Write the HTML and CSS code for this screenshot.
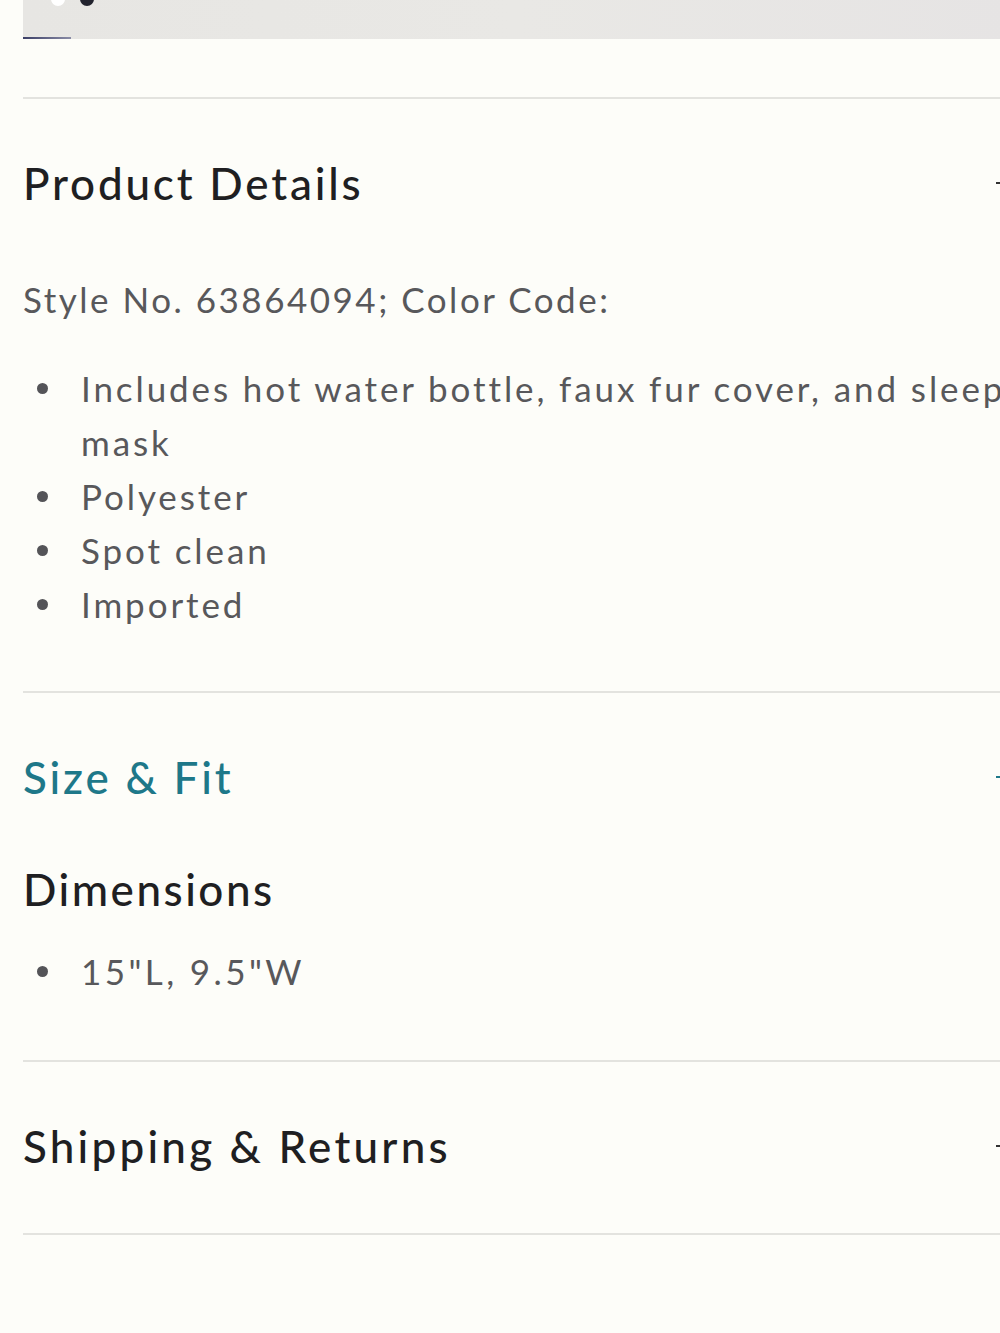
FILE: index.html
```html
<!DOCTYPE html>
<html>
<head>
<meta charset="utf-8">
<link rel="stylesheet" href="styles.css">
</head>
<body>
<div class="page">
  <div class="hero">
    <span class="dot dot-light"></span>
    <span class="dot dot-dark"></span>
    <span class="hero-bar"></span>
  </div>

  <section class="acc acc-first">
    <div class="acc-head">
      <h2 class="acc-title">Product Details</h2>
      <span class="minus"></span>
    </div>
    <div class="acc-body">
      <p class="style-no">Style No. 63864094; Color Code:</p>
      <ul class="bullets">
        <li>Includes hot water bottle, faux fur cover, and sleep mask</li>
        <li>Polyester</li>
        <li>Spot clean</li>
        <li>Imported</li>
      </ul>
    </div>
  </section>

  <section class="acc">
    <div class="acc-head">
      <h2 class="acc-title teal">Size &amp; Fit</h2>
      <span class="minus minus-teal"></span>
    </div>
    <div class="acc-body acc-body-size">
      <h3 class="sub">Dimensions</h3>
      <ul class="bullets bullets-dim">
        <li>15"L, 9.5"W</li>
      </ul>
    </div>
  </section>

  <section class="acc acc-last">
    <div class="acc-head">
      <h2 class="acc-title title-wide">Shipping &amp; Returns</h2>
      <span class="minus"></span>
    </div>
  </section>
</div>
</body>
</html>
```

FILE: styles.css
```css
html, body {
  margin: 0;
  padding: 0;
  background: #fdfdf9;
  overflow: hidden;
}
body {
  font-family: Lato, "Open Sans", sans-serif;
  width: 1000px;
  height: 1333px;
}
.page {
  margin-left: 23px;
  width: 990px;
}
.hero {
  position: relative;
  height: 39px;
  background: linear-gradient(90deg, #e7e6e3 0%, #e9e8e5 50%, #e6e4e4 100%);
  margin-bottom: 58px;
}
.dot {
  position: absolute;
  width: 14px;
  height: 14px;
  border-radius: 50%;
  top: -8px;
}
.dot-light { left: 28px; background: #ffffff; }
.dot-dark { left: 57px; background: #22232e; }
.hero-bar {
  position: absolute;
  left: 0;
  bottom: 0;
  width: 48px;
  height: 2px;
  background: linear-gradient(90deg, #3b3f66, #8a8ca6);
}
.acc {
  border-top: 2px solid #e3e3df;
}
.acc-last {
  border-bottom: 2px solid #e3e3df;
}
.acc-head {
  display: flex;
  align-items: center;
  justify-content: space-between;
  height: 171px;
  box-sizing: border-box;
  padding-bottom: 4px;
}
.acc-title {
  margin: 0;
  font-size: 44px;
  font-weight: 500;
  color: #1f1f22;
  letter-spacing: 2.8px;
  line-height: 56px;
}
.acc-title.teal { color: #1e7889; }
.acc-title.title-wide { letter-spacing: 3.2px; }
.minus {
  width: 14px;
  height: 2px;
  background: #333;
  margin-right: 3px;
}
.minus-teal { background: #1e7889; }
.acc-body {
  padding-bottom: 60px;
}
.style-no {
  margin: 2px 0 35px 0;
  font-size: 35px;
  line-height: 54px;
  color: #58585b;
  letter-spacing: 2.5px;
}
.bullets {
  margin: 0;
  padding-left: 58px;
  list-style: none;
  font-size: 35px;
  line-height: 54px;
  color: #58585b;
  letter-spacing: 2.9px;
}
.bullets li {
  position: relative;
}
.bullets li::before {
  content: "";
  position: absolute;
  left: -44px;
  top: 22px;
  width: 11px;
  height: 11px;
  border-radius: 50%;
  background: #545458;
}
.acc-body-size { padding-bottom: 62px; }
.sub {
  margin: -3px 0 27px 0;
  font-size: 44px;
  line-height: 56px;
  font-weight: 500;
  color: #1f1f22;
  letter-spacing: 2.5px;
}
.bullets-dim { letter-spacing: 3.4px; }
```
